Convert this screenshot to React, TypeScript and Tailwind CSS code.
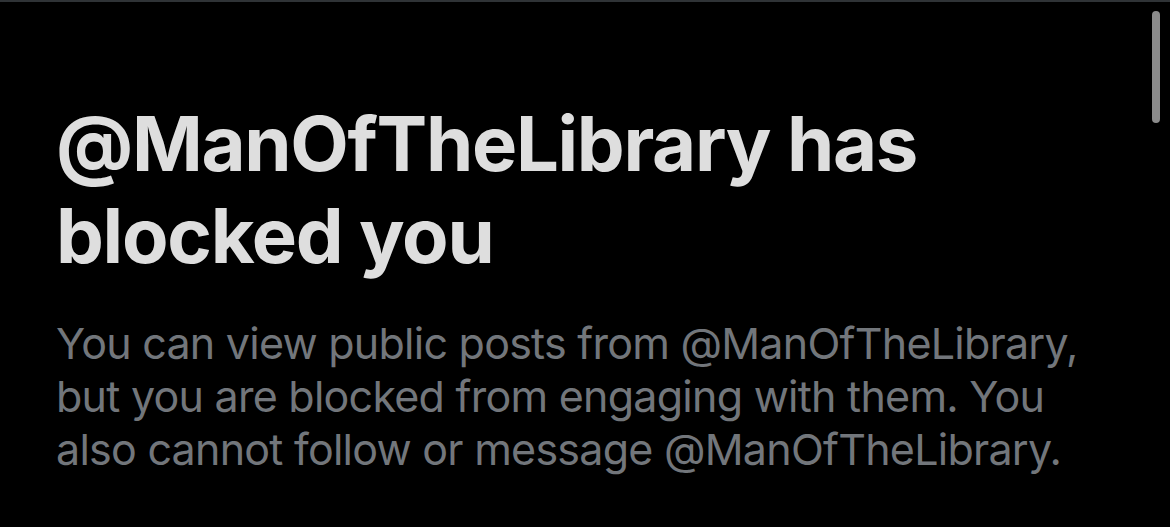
import React from 'react';

const handle = '@ManOfTheLibrary';

const BlockedNotice: React.FC = () => {
  return (
    <div className="relative h-[527px] w-[1170px] overflow-hidden bg-black border-t-2 border-[#2f3336] font-['Inter',sans-serif]">
      <div className="absolute right-[10px] top-[9px] h-[112px] w-[8px] rounded-full bg-[#8b8b8b]"></div>

      <div className="pt-[95px] pl-[56px] pr-[60px]">
        <h1 className="text-[76px] leading-[92px] font-bold tracking-[-1.3px] text-[#dedede] whitespace-nowrap">
          {handle} has
          <br />
          blocked you
        </h1>

        <p className="mt-[36px] text-[43px] leading-[53px] tracking-[-0.75px] text-[#72767b] whitespace-nowrap">
          You can view public posts from {handle},
          <br />
          but you are blocked from engaging with them. You
          <br />
          also cannot follow or message {handle}.
        </p>
      </div>
    </div>
  );
};

export default function App() {
  return <BlockedNotice />;
}
